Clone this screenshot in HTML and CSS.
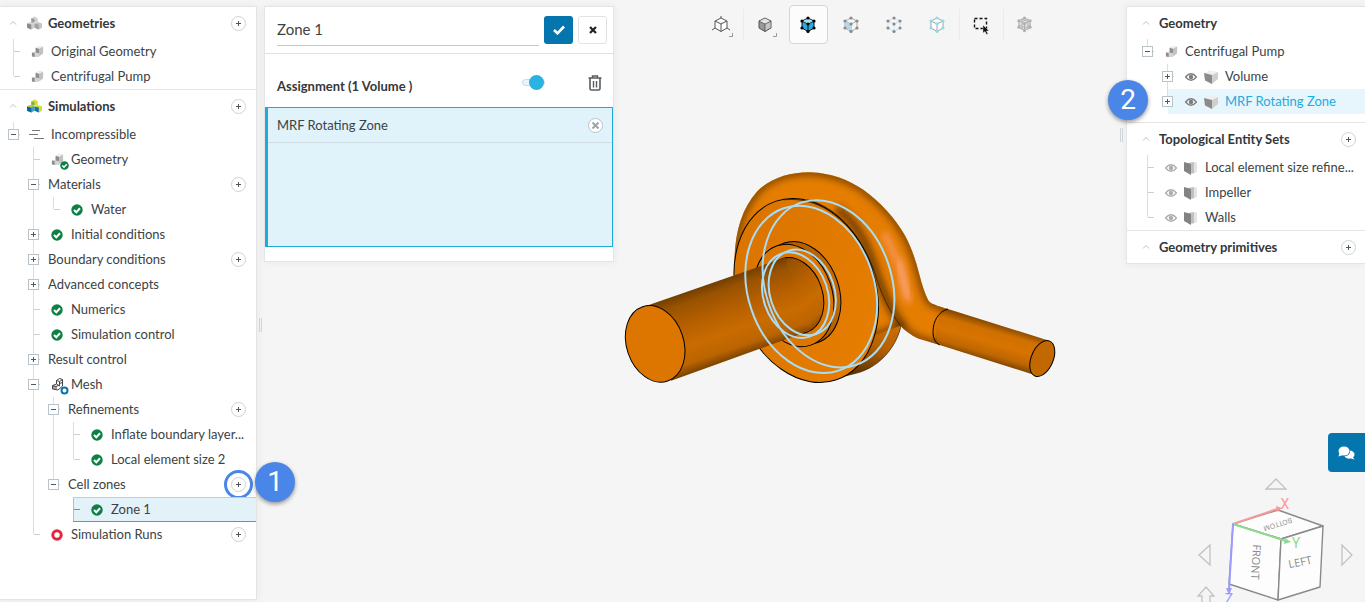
FILE: index.html
```html
<!DOCTYPE html>
<html lang="en">
<head>
  <meta charset="UTF-8">
  <meta name="viewport" content="width=device-width, initial-scale=1.0">
  <link rel="stylesheet" href="styles.css">
  <title>Workbench</title>
</head>
<body>
  <!-- shared icons -->
  <svg class="sprite" aria-hidden="true">
    <symbol id="caret" viewBox="0 0 8 6"><path d="M1 4.5 4 1.5 7 4.5" fill="none" stroke="#b9c1c6"/></symbol>
    <symbol id="part" viewBox="0 0 14 14">
      <path d="M5 3 9 1 13 2V9L8 13 1 13V8L5 7Z" fill="#d4d4d4"/>
      <path d="M5 3 9 4V9L5 8ZM1 8 4 9V13L1 12Z" fill="#8e8e8e"/>
      <path d="M5 3 9 1 13 2 9 4Z" fill="#efefef"/>
      <path d="M9 4 13 2V9L9 12Z" fill="#c2c2c2"/>
    </symbol>
    <symbol id="stack" viewBox="0 0 14 13">
      <path d="M4 2 7 .5 10 2V6H4Z" fill="#d0d0d0"/><path d="M4 2 7 3V6H4Z" fill="#999"/>
      <path d="M0 7 3 5.500 7 7V11L4 12.500 0 11Z" fill="#d0d0d0"/><path d="M0 7 4 8V12.500L0 11Z" fill="#8c8c8c"/>
      <path d="M7 7 10 5.500 14 7V11L11 12.500 7 11Z" fill="#c6c6c6"/><path d="M7 7 11 8V12.500L7 11Z" fill="#a2a2a2"/>
    </symbol>
    <symbol id="stack-color" viewBox="0 0 14 13">
      <path d="M4 2 7 .5 10 2V6H4Z" fill="#d9dc2c"/><path d="M4 2 7 3V6H4Z" fill="#7cb342"/>
      <path d="M0 7 3 5.500 7 7V11L4 12.500 0 11Z" fill="#3fa0d0"/><path d="M0 7 4 8V12.500L0 11Z" fill="#0569a8"/>
      <path d="M0 7 3 5.500 6 6.500 4 8Z" fill="#c9d32c"/>
      <path d="M7 7 10 5.500 14 7V11L11 12.500 7 11Z" fill="#d9dc2c"/><path d="M7 7 11 8V12.500L7 11Z" fill="#0575b5"/>
    </symbol>
    <symbol id="flow" viewBox="0 0 16 12"><path d="M3 1.500H11M0 5.500H9M5 9.500H15" stroke="#777" fill="none"/></symbol>
    <symbol id="check" viewBox="0 0 12 12"><circle cx="6" cy="6" r="5.700" fill="#0d8043"/><path d="M3 6 5.300 8.200 9 4.200" fill="none" stroke="#fff" stroke-width="2"/></symbol>
    <symbol id="part-ok" viewBox="0 0 18 18"><use href="#part" width="13" height="13" y="1"/><use href="#check" x="9" y="9" width="9" height="9"/></symbol>
    <symbol id="mesh" viewBox="0 0 18 18">
      <path d="M5.500 3.500 8.500 1.500 11.500 2.500V9L7 13 1.500 12V8.500L5.500 7ZM5.500 3.500 8.500 4.500V9M8.500 4.500 11.500 2.500M8.500 9 5.500 7M1.500 8.500 5 9.500V12.500M5 9.500 8.500 8M8.500 6.500 11.500 5.500M3 9V12" fill="none" stroke="#444"/>
      <circle cx="13.500" cy="13.500" r="3" fill="#fff" stroke="#0575b5" stroke-width="2"/>
    </symbol>
    <symbol id="ring" viewBox="0 0 12 12"><circle cx="6" cy="6" r="4.200" fill="#fff" stroke="#e2263c" stroke-width="3"/></symbol>
    <symbol id="eye" viewBox="0 0 12 8"><path d="M.5 4Q6-2.500 11.500 4 6 10.500.5 4Z" fill="none" stroke="currentColor" stroke-width="1.400"/><circle cx="6" cy="4" r="2.200" fill="currentColor"/></symbol>
    <symbol id="solid" viewBox="0 0 14 14"><path d="M0 3 6 .5 14 2 8 5Z" fill="#efefef"/><path d="M0 3 8 5V14L1 10.500Z" fill="#8b8b8b"/><path d="M8 5 14 2V9L8 14Z" fill="#cfcfcf"/></symbol>
    <symbol id="faces" viewBox="0 0 14 14"><path d="M8 2 13 1V11L8 13Z" fill="#e4e4e4"/><path d="M4 2 10 1V12L5 13Z" fill="#c0c0c0"/><path d="M0 1 7 3V14L0 10Z" fill="#838383"/></symbol>
    <symbol id="cube" viewBox="0 0 18 18"><path d="M9 2 15 5V12L9 15.500 3 12V5ZM3 5 9 8 15 5M9 8V15.500" stroke-linejoin="round"/></symbol>
    <symbol id="dots" viewBox="0 0 18 18"><circle cx="9" cy="2" r="1.600"/><circle cx="15" cy="5" r="1.600"/><circle cx="15" cy="12" r="1.600"/><circle cx="9" cy="15.500" r="1.600"/><circle cx="3" cy="12" r="1.600"/><circle cx="3" cy="5" r="1.600"/><circle cx="9" cy="8" r="1.600"/></symbol>
  </svg>

  <div class="workbench">
    <nav class="panel sidebar" aria-label="Project">
      <section>
        <header class="head">
          <svg class="caret"><use href="#caret"/></svg>
          <svg class="icon-lg"><use href="#stack"/></svg>
          <h2>Geometries</h2>
          <button class="add" aria-label="Add geometry"></button>
        </header>
        <ul class="tree">
          <li><div class="row"><svg class="slot"><use href="#part" x="4" y="3" width="13" height="13"/></svg><a href="#">Original Geometry</a></div></li>
          <li><div class="row"><svg class="slot"><use href="#part" x="4" y="3" width="13" height="13"/></svg><a href="#">Centrifugal Pump</a></div></li>
        </ul>
      </section>
      <section>
        <header class="head">
          <svg class="caret"><use href="#caret"/></svg>
          <svg class="icon-lg"><use href="#stack-color"/></svg>
          <h2>Simulations</h2>
          <button class="add" aria-label="Add simulation"></button>
        </header>
        <ul class="tree">
          <li>
            <div class="row"><button class="toggle open" aria-label="Collapse"></button><svg class="slot"><use href="#flow" x="2" y="4" width="16" height="12"/></svg><a href="#">Incompressible</a></div>
            <ul>
              <li><div class="row"><svg class="slot"><use href="#part-ok" x="4" y="2" width="18" height="18"/></svg><a href="#">Geometry</a></div></li>
              <li>
                <div class="row"><button class="toggle open" aria-label="Collapse"></button><a href="#">Materials</a><button class="add" aria-label="Add material"></button></div>
                <ul>
                  <li><div class="row"><svg class="slot"><use href="#check" x="4" y="4" width="12" height="12"/></svg><a href="#">Water</a></div></li>
                </ul>
              </li>
              <li><div class="row"><button class="toggle" aria-label="Expand"></button><svg class="slot"><use href="#check" x="4" y="4" width="12" height="12"/></svg><a href="#">Initial conditions</a></div></li>
              <li><div class="row"><button class="toggle" aria-label="Expand"></button><a href="#">Boundary conditions</a><button class="add" aria-label="Add boundary condition"></button></div></li>
              <li><div class="row"><button class="toggle" aria-label="Expand"></button><a href="#">Advanced concepts</a></div></li>
              <li><div class="row"><svg class="slot"><use href="#check" x="4" y="4" width="12" height="12"/></svg><a href="#">Numerics</a></div></li>
              <li><div class="row"><svg class="slot"><use href="#check" x="4" y="4" width="12" height="12"/></svg><a href="#">Simulation control</a></div></li>
              <li><div class="row"><button class="toggle" aria-label="Expand"></button><a href="#">Result control</a></div></li>
              <li>
                <div class="row"><button class="toggle open" aria-label="Collapse"></button><svg class="slot"><use href="#mesh" x="4" y="2" width="18" height="18"/></svg><a href="#">Mesh</a></div>
                <ul>
                  <li>
                    <div class="row"><button class="toggle open" aria-label="Collapse"></button><a href="#">Refinements</a><button class="add" aria-label="Add refinement"></button></div>
                    <ul>
                      <li><div class="row"><svg class="slot"><use href="#check" x="4" y="4" width="12" height="12"/></svg><a href="#">Inflate boundary layer...</a></div></li>
                      <li><div class="row"><svg class="slot"><use href="#check" x="4" y="4" width="12" height="12"/></svg><a href="#">Local element size 2</a></div></li>
                    </ul>
                  </li>
                  <li>
                    <div class="row"><button class="toggle open" aria-label="Collapse"></button><a href="#">Cell zones</a><button class="add marked" aria-label="Add cell zone"></button><span class="step step-add">1</span></div>
                    <ul>
                      <li><div class="row current"><svg class="slot"><use href="#check" x="4" y="4" width="12" height="12"/></svg><a href="#">Zone 1</a></div></li>
                    </ul>
                  </li>
                </ul>
              </li>
              <li><div class="row"><svg class="slot"><use href="#ring" x="4" y="4" width="12" height="12"/></svg><a href="#">Simulation Runs</a><button class="add" aria-label="Add run"></button></div></li>
            </ul>
          </li>
        </ul>
      </section>
    </nav>

    <div class="grip"></div>

    <form class="panel settings">
      <div class="title-bar">
        <input type="text" class="name" value="Zone 1" aria-label="Name">
        <button type="submit" class="apply" aria-label="Apply"><svg width="12" height="10"><path d="M1 5 4.500 8.300 11 1.500" fill="none" stroke="#fff" stroke-width="2.600"/></svg></button>
        <button type="button" class="close" aria-label="Close"><svg width="8" height="8"><path d="M1 1 7 7M7 1 1 7" stroke="#222" stroke-width="2.200"/></svg></button>
      </div>
      <div class="assign">
        <label for="assign-switch">Assignment (1 Volume )</label>
        <input type="checkbox" class="switch" id="assign-switch" checked>
        <button type="button" class="trash" aria-label="Clear"><svg width="14" height="16" fill="none" stroke="#555d62"><path d="M.5 3H13.500M4.500 3V1H9.500V3" stroke-width="1.400"/><path d="M2 3V13.500Q2 15 3.500 15H10.500Q12 15 12 13.500V3" stroke-width="1.600"/><path d="M5.500 6V12.500M8.500 6V12.500" stroke-width="1.400"/></svg></button>
      </div>
      <div class="assign-list">
        <div class="assign-item">MRF Rotating Zone
          <button type="button" class="remove" aria-label="Remove"><svg width="7" height="7"><path d="M.5 .5 6.500 6.500M6.500 .5 .5 6.500" stroke="#9aa5ab" stroke-width="2"/></svg></button>
        </div>
      </div>
    </form>

    <main class="viewer">
      <div class="toolbar">
        <button aria-label="Wireframe"><svg width="24" height="24"><use href="#cube" x="3" y="3" width="18" height="18" fill="#fff" stroke="#555"/><path d="M12 3V5M3 17 6 15M21 17 18 15" stroke="#555"/><path d="M20 23.500H23.500V20" fill="none" stroke="#999"/></svg></button>
        <i class="sep"></i>
        <button aria-label="Shaded"><svg width="24" height="24"><use href="#cube" x="3" y="3" width="18" height="18" fill="#999" stroke="#555"/><path d="M12 5.500 17 8 12 10.500 7 8Z" fill="#e4e4e4"/><path d="M12.500 11.500 17.500 9V14.500L12.500 17.500Z" fill="#c4c4c4"/><path d="M20 23.500H23.500V20" fill="none" stroke="#999"/></svg></button>
        <button class="active" aria-label="Select volumes"><svg width="24" height="24"><use href="#cube" x="3" y="3" width="18" height="18" fill="#29abe2" stroke="#111"/><path d="M12 5.500 17 8 12 10.500 7 8Z" fill="#a8dcf2"/><use href="#dots" x="3" y="3" width="18" height="18" fill="#000"/></svg></button>
        <button aria-label="Select faces"><svg width="24" height="24"><use href="#cube" x="3" y="3" width="18" height="18" fill="#f5f5f5" stroke="#aaa"/><path d="M6.500 9 11.500 11.500V17.500L6.500 14.500Z" fill="#a8dcf2"/><use href="#dots" x="3" y="3" width="18" height="18" fill="#8a8a8a"/></svg></button>
        <button aria-label="Select vertices"><svg width="24" height="24"><use href="#cube" x="3" y="3" width="18" height="18" fill="none" stroke="#b5e0f0" stroke-dasharray="3 1"/><use href="#dots" x="3" y="3" width="18" height="18" fill="#8a8a8a"/></svg></button>
        <button aria-label="Select edges"><svg width="24" height="24"><use href="#cube" x="3" y="3" width="18" height="18" fill="#fff" stroke="#a3a3a3"/><use href="#dots" x="3" y="3" width="18" height="18" fill="#8ddcec"/></svg></button>
        <i class="sep"></i>
        <button aria-label="Box select"><svg width="24" height="24"><rect x="5.500" y="5.500" width="12" height="10" fill="none" stroke="#111" stroke-width="1.400" stroke-dasharray="3 2"/><path d="M14 12V20L16 18.500 17.500 21.500 19 21 17.500 18H20Z" fill="#111" stroke="#f5f5f5" stroke-width=".4"/></svg></button>
        <i class="sep"></i>
        <button aria-label="Hide selection"><svg width="24" height="24"><use href="#cube" x="3" y="3" width="17" height="17" fill="#ddd" stroke="#aaa"/><path d="M9 7V17M15 7V17M6 12 12 15 18 12M9 6 15 9M15 6 9 9" fill="none" stroke="#b4b4b4"/><use href="#dots" x="3" y="3" width="17" height="17" fill="#b0b0b0"/></svg></button>
      </div>

      <svg class="model" viewBox="613 44 514 558" role="img" aria-label="Centrifugal pump">
        <defs>
          <linearGradient id="pipe" gradientUnits="userSpaceOnUse" x1="320" y1="365" x2="398" y2="590">
            <stop offset="0" stop-color="#744000"/><stop offset=".12" stop-color="#985200"/><stop offset=".4" stop-color="#b86000"/><stop offset=".65" stop-color="#c96c00"/><stop offset=".86" stop-color="#bb6400"/><stop offset="1" stop-color="#744000"/>
          </linearGradient>
          <linearGradient id="outlet" gradientUnits="userSpaceOnUse" x1="1160" y1="493" x2="1128" y2="604">
            <stop offset="0" stop-color="#8a4b00"/><stop offset=".2" stop-color="#d07000"/><stop offset=".5" stop-color="#d87400"/><stop offset=".8" stop-color="#be6600"/><stop offset="1" stop-color="#7a4200"/>
          </linearGradient>
          <linearGradient id="wall" gradientUnits="userSpaceOnUse" x1="820" y1="420" x2="760" y2="650">
            <stop offset="0" stop-color="#e07a00"/><stop offset=".6" stop-color="#b56000"/><stop offset="1" stop-color="#5c3200"/>
          </linearGradient>
          <linearGradient id="disc" x1="0" y1="0" x2="1" y2="1"><stop offset="0" stop-color="#d87300"/><stop offset="1" stop-color="#e87f00"/></linearGradient>
          <linearGradient id="hub" x1="0" y1="0" x2="1" y2="0"><stop offset="0" stop-color="#7c4300"/><stop offset=".5" stop-color="#a85a00"/><stop offset="1" stop-color="#c56a00"/></linearGradient>
          <filter id="soft" x="-20%" y="-20%" width="140%" height="140%"><feGaussianBlur stdDeviation="12"/></filter>
          <path id="volute" d="M372 345C368 240 385 155 440 93 480 52 540 34 600 35 665 37 715 58 760 88 810 124 855 172 885 225 905 262 918 300 928 340 936 372 945 400 955 420 962 430 970 434 1015 447L990 555 925 536C900 522 885 512 872 497L600 600 372 345Z"/>
          <clipPath id="volute-clip"><use href="#volute"/></clipPath>
        </defs>
        <g transform="translate(610 160) scale(.3333)" fill="none" stroke-width="3">
          <path d="M700 170C800 300 820 430 874 495 862 555 815 620 740 640L630 668Z" fill="url(#wall)"/>
          <path d="M874 495C862 555 815 620 740 640L700 650" stroke="#2b1800" stroke-width="2"/>
          <use href="#volute" fill="#e47d00"/>
          <g clip-path="url(#volute-clip)">
            <use href="#volute" stroke="#7a4200" stroke-width="20" filter="url(#soft)"/>
            <path d="M680 145C750 190 780 280 800 345 825 415 850 460 880 505" stroke="#5a3000" stroke-width="26" filter="url(#soft)" opacity=".8"/>
            <path d="M825 225C850 270 870 320 882 370 888 395 893 410 898 420" stroke="#ff9a68" stroke-width="20" stroke-linecap="round" filter="url(#soft)" opacity=".85"/>
            <path d="M868 300C876 330 886 380 894 408" stroke="#ffb090" stroke-width="10" stroke-linecap="round" filter="url(#soft)"/>
          </g>
          <path d="M590 118C690 140 765 245 795 340 815 405 840 455 872 497" stroke="#1c1000" stroke-width="2"/>
          <ellipse cx="588" cy="391" rx="208" ry="284" transform="rotate(-18.700 588 391)" fill="url(#disc)" stroke="#000"/>
          <path d="M520 118C640 105 745 200 790 330" stroke="#1c1000" stroke-width="2"/>

          <ellipse cx="572" cy="398" rx="115" ry="158" transform="rotate(-18.700 572 398)" fill="url(#hub)" stroke="#000"/>
          <ellipse cx="551" cy="406" rx="115" ry="158" transform="rotate(-18.700 551 406)" fill="#dc7600" stroke="#000"/>

          <ellipse cx="552" cy="406" rx="85" ry="117" transform="rotate(-18.700 552 406)" fill="url(#pipe)" stroke="#000"/>
          <path d="M105 438 524 292 600 512 181 663Z" fill="url(#pipe)"/>
          <ellipse cx="133" cy="552" rx="86" ry="118" transform="rotate(-18.700 133 552)" fill="#dc7600" stroke="#000"/>

          <path d="M1015 447 1315 541 1290 650 990 555Q958 500 1015 447Z" fill="url(#outlet)"/>
          <path d="M1015 447C985 455 970 485 970 515 970 535 976 549 990 555" stroke="#000"/>
          <ellipse cx="1299" cy="596" rx="33" ry="57" transform="rotate(23 1299 596)" fill="#c26800" stroke="#000"/>

          <g stroke="#a9dcf5" stroke-width="6">
            <ellipse cx="603" cy="388" rx="190" ry="258" transform="rotate(-18.700 603 388)"/>
            <ellipse cx="655" cy="371" rx="190" ry="258" transform="rotate(-18.700 655 371)"/>
            <ellipse cx="556" cy="405" rx="97" ry="132" transform="rotate(-18.700 556 405)"/>
            <ellipse cx="576" cy="397" rx="97" ry="132" transform="rotate(-18.700 576 397)"/>
          </g>
        </g>
      </svg>
    </main>

    <aside class="side">
      <div class="panel scene">
        <section class="spaced">
          <header class="head">
            <svg class="caret"><use href="#caret"/></svg>
            <h2>Geometry</h2>
          </header>
          <ul class="tree">
            <li>
              <div class="row"><button class="toggle open" aria-label="Collapse"></button><svg class="slot"><use href="#part" x="4" y="3" width="13" height="13"/></svg><a href="#">Centrifugal Pump</a></div>
              <ul>
                <li><div class="row"><button class="toggle" aria-label="Expand"></button><svg class="slot eye"><use href="#eye" x="4" y="6" width="12" height="8"/></svg><svg class="slot"><use href="#solid" x="3" y="3" width="14" height="14"/></svg><a href="#">Volume</a></div></li>
                <li><div class="row picked"><span class="step step-pick">2</span><button class="toggle" aria-label="Expand"></button><svg class="slot eye"><use href="#eye" x="4" y="6" width="12" height="8"/></svg><svg class="slot"><use href="#solid" x="3" y="3" width="14" height="14"/></svg><a href="#">MRF Rotating Zone</a></div></li>
              </ul>
            </li>
          </ul>
        </section>
        <section>
          <header class="head">
            <svg class="caret"><use href="#caret"/></svg>
            <h2>Topological Entity Sets</h2>
            <button class="add" aria-label="Add entity set"></button>
          </header>
          <ul class="tree">
            <li><div class="row"><svg class="slot eye dim"><use href="#eye" x="4" y="6" width="12" height="8"/></svg><svg class="slot"><use href="#faces" x="3" y="3" width="14" height="14"/></svg><a href="#">Local element size refine...</a></div></li>
            <li><div class="row"><svg class="slot eye dim"><use href="#eye" x="4" y="6" width="12" height="8"/></svg><svg class="slot"><use href="#faces" x="3" y="3" width="14" height="14"/></svg><a href="#">Impeller</a></div></li>
            <li><div class="row"><svg class="slot eye dim"><use href="#eye" x="4" y="6" width="12" height="8"/></svg><svg class="slot"><use href="#faces" x="3" y="3" width="14" height="14"/></svg><a href="#">Walls</a></div></li>
          </ul>
        </section>
        <section>
          <header class="head">
            <svg class="caret"><use href="#caret"/></svg>
            <h2>Geometry primitives</h2>
            <button class="add" aria-label="Add primitive"></button>
          </header>
        </section>
        <div class="grip grip-side"></div>
      </div>

      <button class="chat" aria-label="Chat">
        <svg width="17" height="14" fill="#fff"><path d="M12 4.500C15 5 16.500 6.500 16.500 8.500 16.500 9.700 15.800 10.700 15 11.300L16.500 13.500 13 12.500C10 13 7.500 12 6.500 10.300 10 10 12.500 8 12 4.500Z"/><ellipse cx="6" cy="5" rx="5.500" ry="4.500"/><path d="M1.500 7 .5 10.500 5 9Z"/></svg>
      </button>
      <svg class="nav-cube" viewBox="1195 475 165 127" role="img" aria-label="Orientation">
        <g fill="#f5f5f5" stroke="#c2c2c2" stroke-width="1.300">
          <path d="M1266 489 1276 479 1286 489ZM1210 545 1199 555 1210 565ZM1342 545 1352 555 1342 565Z"/>
          <path d="M1202 604V596H1198L1206 587 1214 596H1210V604"/>
        </g>
        <g fill="#fdfdfd" stroke="#8a8a8a" stroke-width="1.400" stroke-linejoin="round">
          <path d="M1233 524 1278 510 1323 526 1281 539Z"/>
          <path d="M1233 524 1281 539 1278 600 1229 584Z"/>
          <path d="M1281 539 1323 526 1320 587 1278 600Z"/>
        </g>
        <g class="cube-text">
          <text class="small" transform="translate(1278 525) rotate(163)" y="3">BOTTOM</text>
          <text transform="translate(1256 562) rotate(93)" y="4">FRONT</text>
          <text transform="translate(1300 562) rotate(-12)" y="4">LEFT</text>
        </g>
        <g fill="none" stroke-width="2">
          <path d="M1233 524 1277 509" stroke="#f79a9a"/><path d="M1276 506 1282 508 1277 512Z" fill="#f79a9a"/>
          <path d="M1233 524 1286 541" stroke="#8edb8e"/><path d="M1285 538 1291 542 1284 544Z" fill="#8edb8e"/>
          <path d="M1233 524 1229 590" stroke="#9a9aff"/><path d="M1226 588H1232L1229 595Z" fill="#9a9aff"/>
        </g>
        <g class="axis"><text x="1285" y="509" fill="#f79a9a">X</text><text x="1296" y="548" fill="#8edb8e">Y</text><text x="1229" y="604" fill="#9a9aff">Z</text></g>
      </svg>
    </aside>
  </div>
</body>
</html>
```

FILE: styles.css
```css
* {
  box-sizing: border-box;
}

body {
  margin: 0;
  background: #f5f5f5;
  color: #3c4245;
  font: 13px/20px Lato, "Open Sans", sans-serif;
}

button {
  padding: 0;
  border: none;
  background: none;
  cursor: pointer;
}

ul {
  margin: 0;
  padding: 0;
  list-style: none;
}

svg {
  display: block;
  flex: none;
}

.sprite {
  width: 0;
  height: 0;
  position: absolute;
}

.workbench {
  display: grid;
  grid-template-columns: 257px 7px 350px 1fr 239px;
  height: 100vh;
  overflow: hidden;
}

.panel {
  margin-top: 6px;
  background: #fff;
  border: 1px solid #e4e4e4;
  box-shadow: 0 0 8px rgba(0, 0, 0, 0.06);
}

/* tree panels */

.sidebar {
  margin-bottom: 2px;
  border-left: none;
}

.panel section {
  border-bottom: 1px solid #e4e4e4;
}

.panel section:last-of-type {
  border-bottom: none;
}

.panel .spaced {
  padding-bottom: 8px;
}

.head {
  display: flex;
  align-items: center;
  height: 32px;
  padding-left: 9px;
}

.head h2 {
  flex: 1;
  margin: 0 0 0 8px;
  font-size: 13px;
  font-weight: bold;
  line-height: 20px;
  color: #33383b;
}

.caret {
  width: 8px;
  height: 6px;
}

.icon-lg {
  width: 15px;
  height: 14px;
  margin-left: 10px;
}

.icon-lg + h2 {
  margin-left: 6px;
}

.tree {
  padding-left: 8px;
}

.tree ul {
  padding-left: 20px;
}

/* guide lines: trunk, then the tick to each row */
.tree li {
  background:
    linear-gradient(#d8dee1, #d8dee1) 5px 0 / 1px 100% no-repeat,
    linear-gradient(#c9d0d4, #c9d0d4) 6px 12px / 6px 1px no-repeat;
}

.tree li:last-child {
  background-size: 1px 12px, 6px 1px;
}

.row {
  display: flex;
  align-items: center;
  height: 25px;
  position: relative;
}

.row a {
  color: inherit;
  text-decoration: none;
  white-space: nowrap;
  margin-left: 20px;
  padding-bottom: 2px;
}

.row .toggle + a {
  margin-left: 9px;
}

.row .slot + a {
  margin-left: 4px;
}

.slot {
  width: 20px;
  height: 20px;
  margin-left: 19px;
  overflow: visible;
}

.toggle + .slot {
  margin-left: 8px;
}

.slot + .slot {
  margin-left: 0;
}

.toggle {
  width: 11px;
  height: 11px;
  flex: none;
  border: 1px solid #b9c4ca;
  background:
    linear-gradient(#4b5a62, #4b5a62) center / 5px 1px no-repeat,
    linear-gradient(#4b5a62, #4b5a62) center / 1px 5px no-repeat,
    #fff;
}

.toggle.open {
  background:
    linear-gradient(#4b5a62, #4b5a62) center / 5px 1px no-repeat,
    #fff;
}

.add {
  width: 15px;
  height: 15px;
  flex: none;
  margin: 0 10px 0 auto;
  border: 1px solid #ccd3d7;
  border-radius: 50%;
  background:
    linear-gradient(#555, #555) center / 5px 1px no-repeat,
    linear-gradient(#555, #555) center / 1px 5px no-repeat,
    #fff;
}

.add.marked {
  outline: 3px solid #4a86e8;
  outline-offset: 4px;
}

.current {
  background:
    linear-gradient(#c3cdd2, #c3cdd2) 5px 0 / 100% 1px no-repeat,
    linear-gradient(#29abe2, #29abe2) 5px 100% / 100% 1px no-repeat,
    linear-gradient(#29abe2, #29abe2) 6px 12px / 6px 1px no-repeat,
    linear-gradient(#b4bec4, #b4bec4) 5px 0 / 1px 100% no-repeat,
    linear-gradient(#e3f1f9, #e3f1f9) 5px 0 / 100% 100% no-repeat;
}

.picked {
  color: #1fabe0;
  background: linear-gradient(#e6f6fc, #e6f6fc) 6px 0 / 100% 100% no-repeat;
}

.eye {
  color: #7d7d7d;
}

.eye.dim {
  color: #adadad;
}

/* numbered callouts */
.step {
  position: absolute;
  z-index: 2;
  width: 40px;
  height: 40px;
  border-radius: 50%;
  background: #4a86e8;
  box-shadow: 0 2px 4px rgba(0, 0, 0, 0.4);
  color: #fff;
  font: 28px/40px Roboto, sans-serif;
  text-align: center;
}

.step-add {
  right: -39px;
  top: -10px;
}

.step-pick {
  left: -54px;
  top: -9px;
}

.grip {
  align-self: center;
  justify-self: center;
  width: 3px;
  height: 14px;
  margin-top: 48px;
  border: solid #cfd4d8;
  border-width: 0 1px;
}

/* settings */

.settings {
  align-self: start;
  position: relative;
  padding-bottom: 14px;
}

.title-bar {
  display: flex;
  align-items: center;
  gap: 5px;
  height: 47px;
  padding: 0 6px 0 12px;
  border-bottom: 1px solid #e0e0e0;
}

.name {
  flex: 1;
  min-width: 0;
  height: 32px;
  padding: 0 0 2px;
  border: none;
  border-bottom: 1px solid #c4c9cc;
  background: none;
  color: #3c4245;
  font: 15px Lato, sans-serif;
}

.apply,
.close {
  display: grid;
  place-items: center;
  width: 29px;
  height: 28px;
  border-radius: 3px;
}

.apply {
  background: #0575ad;
}

.close {
  border: 1px solid #e0e3e5;
}

.assign {
  display: flex;
  align-items: center;
  height: 53px;
  padding: 4px 11px 0 12px;
}

.assign label {
  flex: 1;
  padding-top: 6px;
  font-weight: bold;
  color: #33383b;
}

.switch {
  appearance: none;
  display: flex;
  align-items: center;
  justify-content: flex-end;
  width: 23px;
  height: 7px;
  margin: 0 43px 0 0;
  border: 1px solid #cdd9de;
  border-radius: 4px;
  background: #e6f6fc;
}

.switch::before {
  content: "";
  flex: none;
  width: 15px;
  height: 15px;
  border-radius: 50%;
  background: #29b2e2;
}

.assign-list {
  height: 140px;
  border: 1px solid #1fabd9;
  border-left-width: 3px;
  background: #e0f3fb;
}

.assign-item {
  display: flex;
  align-items: center;
  justify-content: space-between;
  height: 35px;
  padding: 0 9px;
  border-bottom: 1px solid #cfdde3;
}

.remove {
  display: grid;
  place-items: center;
  width: 15px;
  height: 15px;
  border: 1px solid #b8c4ca;
  border-radius: 50%;
  background: #fff;
}

/* viewer */

.viewer {
  display: flex;
  flex-direction: column;
  min-width: 0;
}

.toolbar {
  display: flex;
  justify-content: center;
  padding: 5px 0 0 6px;
}

.toolbar button {
  display: grid;
  place-items: center;
  width: 39px;
  height: 39px;
  margin: 0 2px;
  border: 1px solid transparent;
  border-radius: 4px;
}

.toolbar .active {
  border-color: #b9dfee;
  background: #fcfcfc;
}

.sep {
  width: 1px;
  height: 31px;
  margin-top: 4px;
  background: #ebebeb;
}

.model {
  flex: 1;
  width: 100%;
  min-height: 0;
}

/* right side */

.side {
  display: flex;
  flex-direction: column;
  align-items: stretch;
}

.scene {
  position: relative;
  border-right: none;
}

.scene .head {
  padding-left: 15px;
}

.scene .head h2 {
  margin-left: 9px;
}

.scene .tree {
  padding-left: 15px;
}

.scene .add {
  margin-right: 9px;
}

.grip-side {
  position: absolute;
  left: -7px;
  top: 121px;
  margin: 0;
}

.chat {
  display: grid;
  place-items: center;
  align-self: flex-end;
  width: 37px;
  height: 39px;
  margin-top: auto;
  border-radius: 4px 0 0 4px;
  background: #0575ad;
}

.nav-cube {
  align-self: flex-end;
  width: 165px;
  height: 127px;
  margin: 3px 5px 0 0;
}

.cube-text {
  fill: #8a8a8a;
  font: 11px "Open Sans", sans-serif;
  text-anchor: middle;
}

.cube-text .small {
  font-size: 7px;
}

.axis {
  font: 14px Roboto, sans-serif;
  text-anchor: middle;
}
```
